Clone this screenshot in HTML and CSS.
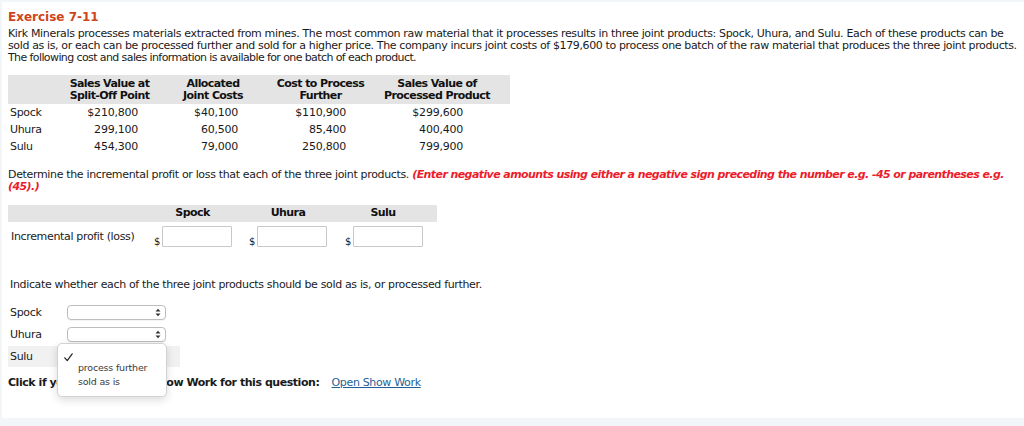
FILE: index.html
```html
<!DOCTYPE html>
<html>
<head>
<meta charset="utf-8">
<link rel="stylesheet" href="styles.css">
</head>
<body>
<div class="sheet">
  <h1 class="title">Exercise 7-11</h1>
  <p class="intro"><span class="l1">Kirk Minerals processes materials extracted from mines. The most common raw material that it processes results in three joint products: Spock, Uhura, and Sulu. Each of these products can be</span>
  <span class="l2">sold as is, or each can be processed further and sold for a higher price. The company incurs joint costs of $179,600 to process one batch of the raw material that produces the three joint products.</span>
  <span class="l3">The following cost and sales information is available for one batch of each product.</span></p>

  <div class="data">
    <div class="dh"></div>
    <div class="dh">Sales Value at<br>Split-Off Point</div>
    <div class="dh">Allocated<br>Joint Costs</div>
    <div class="dh">Cost to Process<br>Further</div>
    <div class="dh">Sales Value of<br>Processed Product</div>
    <div class="dh"></div>

    <div class="dl">Spock</div><div class="dv c1">$210,800</div><div class="dv c2">$40,100</div><div class="dv c3">$110,900</div><div class="dv c4">$299,600</div><div></div>
    <div class="dl">Uhura</div><div class="dv c1">299,100</div><div class="dv c2">60,500</div><div class="dv c3">85,400</div><div class="dv c4">400,400</div><div></div>
    <div class="dl">Sulu</div><div class="dv c1">454,300</div><div class="dv c2">79,000</div><div class="dv c3">250,800</div><div class="dv c4">799,900</div><div></div>
  </div>

  <p class="instr">Determine the incremental profit or loss that each of the three joint products. <em class="note">(Enter negative amounts using either a negative sign preceding the number e.g. -45 or parentheses e.g. (45).)</em></p>

  <div class="profit">
    <div class="ph"></div>
    <div class="ph">Spock</div>
    <div class="ph">Uhura</div>
    <div class="ph">Sulu</div>
    <div class="ph"></div>
    <div class="pl">Incremental profit (loss)</div>
    <div class="pc"><span class="dollar">$</span><span class="box"></span></div>
    <div class="pc"><span class="dollar">$</span><span class="box"></span></div>
    <div class="pc"><span class="dollar">$</span><span class="box"></span></div>
    <div></div>
  </div>

  <p class="indicate">Indicate whether each of the three joint products should be sold as is, or processed further.</p>

  <div class="choices">
    <div class="crow"><span class="clabel">Spock</span><span class="sel"><span class="arrows"><svg width="6" height="9" viewBox="0 0 6 9"><path d="M0.5 3.5 L3 0.8 L5.5 3.5 Z M0.5 5.5 L3 8.2 L5.5 5.5 Z" fill="#333"/></svg></span></span></div>
    <div class="crow"><span class="clabel">Uhura</span><span class="sel"><span class="arrows"><svg width="6" height="9" viewBox="0 0 6 9"><path d="M0.5 3.5 L3 0.8 L5.5 3.5 Z M0.5 5.5 L3 8.2 L5.5 5.5 Z" fill="#333"/></svg></span></span></div>
    <div class="crow active"><span class="clabel">Sulu</span></div>
  </div>

  <p class="showwork"><b>Click if you would like to Show Work for this question:</b> <a class="link" href="#">Open Show Work</a></p>

  <div class="menu">
    <div class="mitem checked"><svg class="check" width="9" height="9" viewBox="0 0 9 9"><path d="M0.8 4.8 L3.2 7.6 L8.2 0.8" fill="none" stroke="#222" stroke-width="1.2" stroke-linecap="round" stroke-linejoin="round"/></svg></div>
    <div class="mitem">process further</div>
    <div class="mitem">sold as is</div>
  </div>
</div>
</body>
</html>
```

FILE: styles.css
```css
html, body {
  margin: 0;
  padding: 0;
  background: #f3f6f9;
}
body {
  font-family: "DejaVu Sans", Verdana, sans-serif;
  font-size: 11px;
  letter-spacing: -0.34px;
  color: #1a1a1a;
}
b {
  letter-spacing: -0.45px;
}
.dh, .ph, .note {
  letter-spacing: -0.58px;
}
.sheet {
  position: relative;
  margin: 2px 0 0 2px;
  height: 416px;
  background: #fff;
  padding: 8px 6px 0 6px;
  box-sizing: border-box;
}
.title {
  margin: 0;
  font-size: 12px;
  line-height: 14px;
  font-weight: bold;
  letter-spacing: 0;
  color: #cf4419;
}
.intro {
  margin: 4px 0 0 0;
  line-height: 12px;
  width: 1012px;
}
.l1, .l2, .l3 {
  display: block;
  white-space: nowrap;
}
.l1 { letter-spacing: -0.34px; }
.l2 { letter-spacing: -0.37px; }
.l3 { letter-spacing: -0.6px; }
.data {
  margin-top: 11px;
  width: 502px;
  display: grid;
  grid-template-columns: 50px 103px 104px 111px 122px 12px;
}
.dh {
  background: #e4e4e4;
  font-weight: bold;
  text-align: center;
  line-height: 12px;
  padding: 3px 0 2px;
  color: #111;
}
.dl, .dv {
  line-height: 17px;
  height: 17px;
}
.dl { padding-left: 2px; }
.dv { text-align: right; letter-spacing: -0.23px; }
.c1 { padding-right: 23px; }
.c2 { padding-right: 27px; }
.c3 { padding-right: 30px; }
.c4 { padding-right: 35px; }
.instr {
  margin: 14px 0 0 0;
  line-height: 12px;
  width: 1012px;
}
.note {
  color: #ec1c2a;
  font-weight: bold;
}
.profit {
  margin-top: 12px;
  width: 429px;
  display: grid;
  grid-template-columns: 137px 95px 96px 94px 7px;
}
.ph {
  background: #e4e4e4;
  font-weight: bold;
  text-align: center;
  height: 17px;
  line-height: 16px;
  color: #111;
}
.pl {
  padding: 9px 0 0 3px;
  line-height: 12px;
}
.pc {
  display: flex;
  align-items: flex-end;
  padding: 4px 0 3px 9px;
}
.dollar {
  line-height: 11px;
  width: 8px;
  font-size: 10px;
}
.box {
  display: block;
  width: 68px;
  height: 19px;
  border: 1px solid #c9c9c9;
  border-radius: 1px;
  background: #fff;
}
.indicate {
  margin: 29px 0 0 2px;
  line-height: 12px;
}
.choices {
  margin-top: 11px;
  display: flex;
  flex-direction: column;
  gap: 1px;
  width: 172px;
}
.crow {
  display: flex;
  align-items: center;
  height: 21px;
}
.crow.active {
  background: #f1f1f1;
}
.clabel {
  width: 57px;
  padding-left: 2px;
}
.sel {
  position: relative;
  display: block;
  width: 97px;
  height: 13px;
  border: 1px solid #bdbdbd;
  border-radius: 4px;
  background: #fff;
  box-shadow: 0 1px 1px rgba(0,0,0,0.05);
}
.arrows {
  position: absolute;
  right: 4px;
  top: 2px;
  display: flex;
}
.showwork {
  margin: 10px 0 0 0;
  line-height: 12px;
}
.link {
  margin-left: 9px;
  color: #235f97;
  text-decoration: underline;
}
.menu {
  position: absolute;
  left: 55px;
  top: 341px;
  width: 108px;
  height: 49px;
  background: #fff;
  border: 1px solid #d2d2d2;
  border-radius: 5px;
  box-shadow: 0 3px 8px rgba(0,0,0,0.14);
  padding-top: 3px;
  box-sizing: content-box;
  font-size: 9.5px;
  letter-spacing: -0.2px;
  color: #3a3a3a;
}
.mitem {
  height: 14px;
  line-height: 14px;
  padding-left: 20px;
}
.mitem.checked {
  position: relative;
}
.check {
  position: absolute;
  left: 6px;
  top: 6px;
}
```
